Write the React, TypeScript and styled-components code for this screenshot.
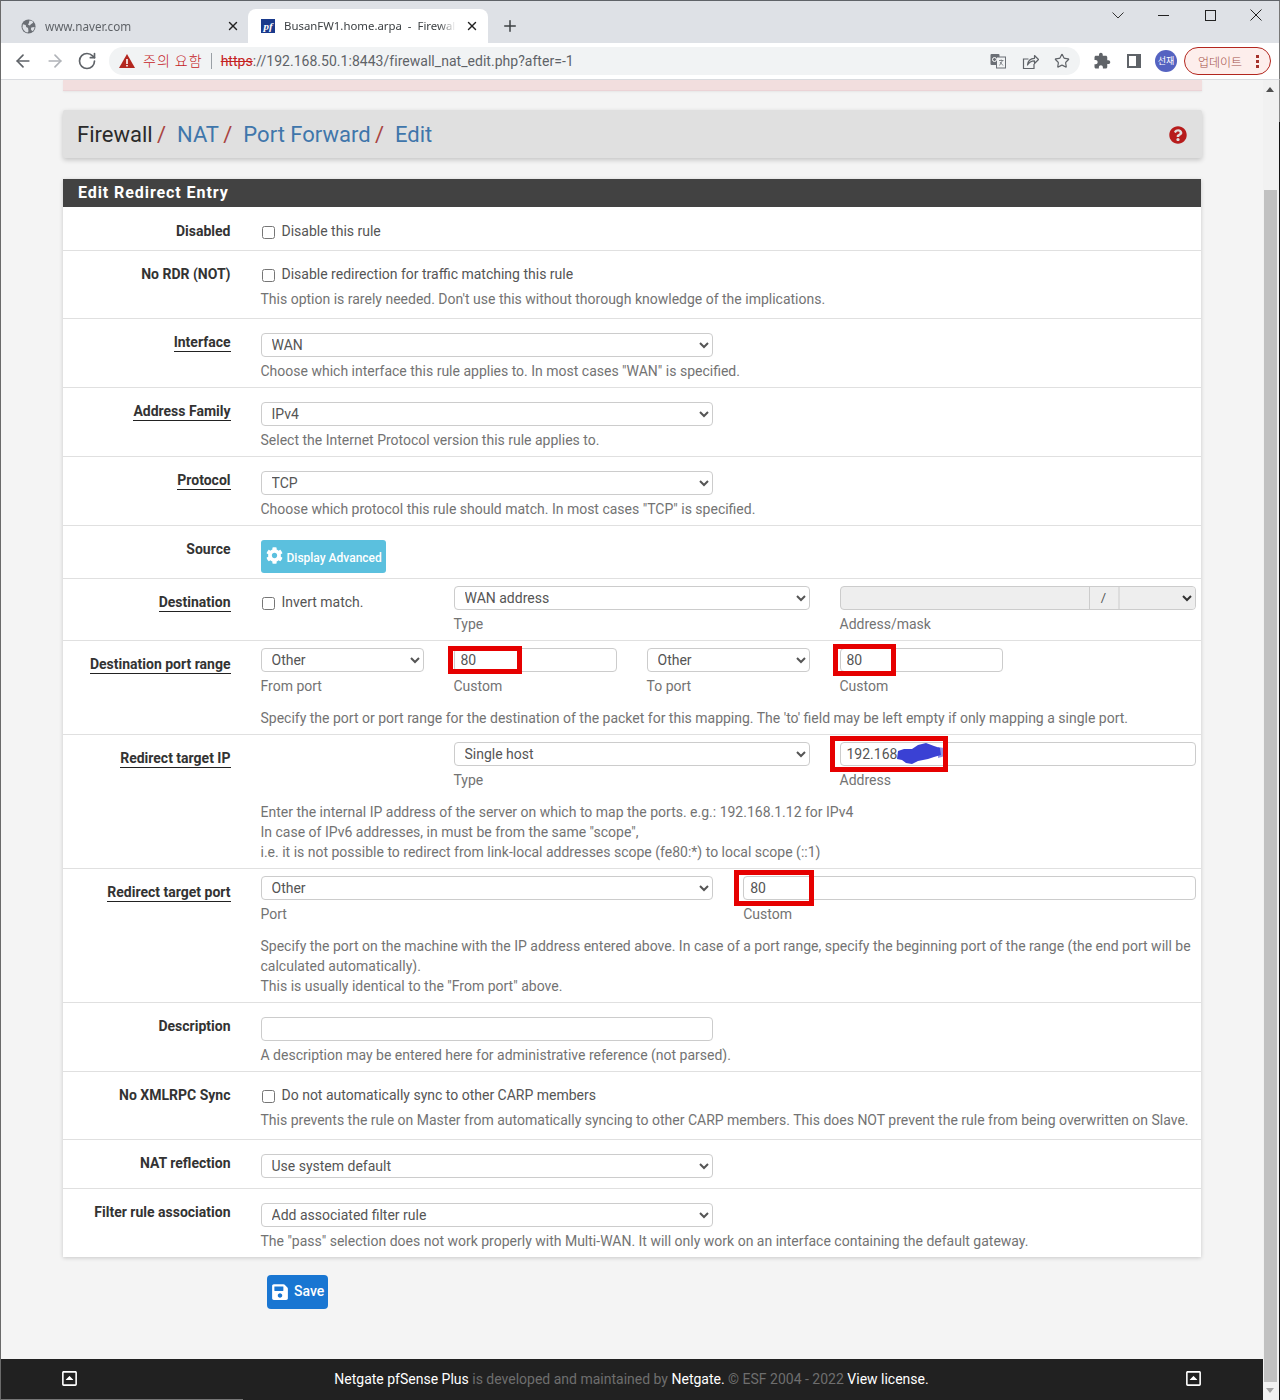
import React from 'react';
import styled, { createGlobalStyle } from 'styled-components';
import { ArrowLeft, ArrowRight, RotateCw, Star, X, Plus } from 'lucide-react';
import { FaCog, FaSave, FaQuestionCircle, FaRegCaretSquareUp } from 'react-icons/fa';

const Global = createGlobalStyle`
  html, body { margin: 0; padding: 0; background: #f4f4f4; }
  body { font-family: Roboto, "Noto Sans CJK KR", sans-serif; font-size: 14px; color: #333; }
  * { box-sizing: border-box; }
`;

const Frame = styled.div`
  width: 1280px; height: 1400px; display: flex; flex-direction: column; overflow: hidden;
  border-top: 1px solid #5f6368; border-left: 1px solid #6a6a6a;
`;
const TabStrip = styled.div`
  height: 42px; background: #dee1e6; display: flex; align-items: flex-end; flex: none; border-right: 1px solid #777;
`;
const Tab = styled.div<{ $active?: boolean; $w: number; $pr: number }>`
  width: ${p => p.$w}px; height: 34px; padding: 0 ${p => p.$pr}px 0 ${p => (p.$active ? 13 : 20)}px; display: flex; align-items: center; gap: 9px;
  border-radius: 8px 8px 0 0; background: ${p => (p.$active ? '#fff' : 'transparent')};
  font: ${p => (p.$active ? 11.4 : 11.7)}px "Noto Sans", sans-serif; color: ${p => (p.$active ? '#3c4043' : '#5f6368')};
`;
const TabTitle = styled.span`
  flex: 1; overflow: hidden; white-space: pre; margin-top: -1px;
  mask-image: linear-gradient(to right, #000 90%, transparent);
`;
const Favicon = styled.span`
  width: 14px; height: 14px; flex: none; background: #1a3a8c; color: #fff; font: italic bold 11px/14px "Liberation Serif", serif; text-align: center;
`;
const NewTab = styled.div`
  width: 44px; height: 34px; display: flex; align-items: center; justify-content: center; color: #3c4043;
`;
const WindowControls = styled.div`
  margin-left: auto; height: 42px; padding: 6px 16px 0 0; display: flex; gap: 30px; align-items: flex-start;
`;
const Toolbar = styled.div`
  height: 37px; flex: none; background: #fff; border-bottom: 1px solid #dadce0; border-right: 1px solid #777; display: flex; align-items: center; padding-left: 12px; color: #5f6368;
`;
const NavIcons = styled.div`
  display: flex; gap: 12px; width: 96px; align-items: center;
`;
const Omnibox = styled.div`
  width: 971px; height: 28px; border-radius: 14px; background: #f1f3f4; display: flex; align-items: center; padding: 0 9px 0 10px; margin-right: 11px;
`;
const Warn = styled.span`
  font: 300 14px/16px "Noto Sans CJK KR", sans-serif; color: #c5221f; margin: -3px 0 0 8px; letter-spacing: 1px;
`;
const Sep = styled.span`
  width: 1px; height: 16px; background: #9aa0a6; margin: 0 9px 0 8px;
`;
const Url = styled.span`
  font: 14px Roboto, sans-serif; color: #5f6368; letter-spacing: .03px;
`;
const Struck = styled.s`
  color: #c5221f;
`;
const OmniIcons = styled.div`
  margin-left: auto; display: flex; gap: 14px; align-items: center;
`;
const OmniIcon = styled.span`
  width: 18px; height: 18px; display: flex; align-items: center; justify-content: center; color: #5f6368;
`;
const ToolIcons = styled.div`
  display: flex; align-items: center; gap: 10px;
`;
const ToolIcon = styled.span`
  width: 22px; height: 22px; display: flex; align-items: center; justify-content: center;
`;
const Avatar = styled.span`
  width: 22px; height: 22px; border-radius: 50%; background: #5563c1; color: #fff; font: 9px/22px "Noto Sans CJK KR", sans-serif; text-align: center;
`;
const UpdatePill = styled.div`
  width: 87px; height: 28px; margin-left: 7px; border: 1px solid #b3261e; border-radius: 14px; background: #fdeeec; display: flex; align-items: center; justify-content: space-between;
  padding: 0 11px 0 13px; font: 300 12px "Noto Sans CJK KR", sans-serif; color: #a5514b;
`;
const Dots = styled.span`
  width: 3px; height: 15px; background: radial-gradient(circle, #a5312b 1.5px, transparent 1.6px) 0 0 / 3px 5px repeat-y;
`;

const Viewport = styled.div`
  flex: 1; display: flex; min-height: 0;
`;
const Page = styled.div`
  flex: 1; display: flex; flex-direction: column; background: #f4f4f4; min-width: 0;
`;
const Scrollbar = styled.div`
  width: 17px; flex: none; display: flex; flex-direction: column; align-items: flex-start; padding-top: 7px;
  background: linear-gradient(to bottom, #888 42px, #111 42px) right top / 1px 100% no-repeat, #f1f1f1;
`;
const ScrollArrow = styled.div<{ $down?: boolean; $c: string }>`
  width: 0; height: 0; margin-left: 3px; border-left: 4px solid transparent; border-right: 4px solid transparent;
  ${p => (p.$down ? `border-top: 5px solid ${p.$c};` : `border-bottom: 5px solid ${p.$c};`)}
`;
const ScrollThumb = styled.div`
  width: 13px; height: 1192px; background: #c1c1c1; margin: 98px 0 6px 1px;
`;
const Content = styled.div`
  padding: 0 62px; flex: 1;
`;
const Alert = styled.div`
  height: 11px; background: #f2dede; border-bottom: 1px solid #ebd3d6; margin-right: -1px; box-shadow: 0 1px 2px rgba(0,0,0,.06);
`;
const Breadcrumb = styled.div`
  margin: 19px -1px 21px 0; height: 48px; background: #e0e0e0; box-shadow: 0 2px 5px rgba(0,0,0,.2); display: flex; align-items: center; padding: 1px 15px 0 14px; font-size: 22px; border-radius: 2px;
`;
const Crumb = styled.span<{ $link?: boolean }>`
  color: ${p => (p.$link ? '#3f76ab' : '#2b2b2b')};
`;
const Slash = styled.span`
  color: #a94442; margin: 0 11px 0 4.3px;
`;
const HelpIcon = styled.span`
  margin-left: auto; color: #b71c1c; display: flex;
`;
const Panel = styled.div`
  background: #fff; box-shadow: 0 1px 4px rgba(0,0,0,.18);
`;
const PanelTitle = styled.h2`
  margin: 0; height: 28px; background: #424242; color: #fff; font: 700 16px/28px Roboto, sans-serif; padding-left: 15px; letter-spacing: .92px;
`;
const Row = styled.div<{ $h: number; $first?: boolean }>`
  height: ${p => p.$h}px; display: flex; gap: 30px;
  box-shadow: ${p => (p.$first ? 'none' : 'inset 0 1px 0 #e0e0e0')};
`;
const LabelCol = styled.div`
  width: 167.5px; flex: none; text-align: right; padding-top: 14px; line-height: 20px; font-weight: 700; color: #333;
`;
const Under = styled.span`
  border-bottom: 1px solid #222; padding-bottom: 1px;
`;
const Controls = styled.div<{ $top: number }>`
  flex: 1; padding: ${p => p.$top}px 5px 0 0; min-width: 0;
`;
const Check = styled.label<{ $mt?: number }>`
  display: flex; align-items: center; gap: 7px; height: 20px; color: #555; padding-left: 1px; margin-top: ${p => p.$mt ?? 0}px;
`;
const Box = styled.input.attrs({ type: 'checkbox' })`
  margin: 2px 0 0; width: 13px; height: 13px;
`;
const Help = styled.div<{ $mt?: number }>`
  margin-top: ${p => p.$mt ?? 4}px; line-height: 20px; color: #737373;
`;
const Sel = styled.select`
  display: block; width: 100%; height: 24px; font: 14px Roboto, sans-serif; color: #555; background: #fff; border: 1px solid #ccc; border-radius: 4px; padding: 0 6px;
`;
const Half = styled.div`
  width: 452.5px;
`;
const Inp = styled.input`
  display: block; width: 100%; height: 24px; font: 14px Roboto, sans-serif; color: #555; background: #fff; border: 1px solid #ccc; border-radius: 4px; padding: 0 6px; outline: none;
`;
const Cols = styled.div<{ $tpl: string; $mb?: number }>`
  display: grid; grid-template-columns: ${p => p.$tpl}; column-gap: 30px; margin-bottom: ${p => p.$mb ?? 0}px;
`;
const Sub = styled.div`
  margin-top: 4px; line-height: 20px; color: #737373;
`;
const Anno = styled.div`
  position: relative;
`;
const RedBox = styled.div<{ $l: number; $t: number; $w: number; $h: number }>`
  position: absolute; left: ${p => p.$l}px; top: ${p => p.$t}px; width: ${p => p.$w}px; height: ${p => p.$h}px; border: 5px solid #e60000; pointer-events: none;
`;
const Scribble = styled.svg`
  position: absolute; left: 56px; top: -1px; width: 50px; height: 26px; filter: blur(.7px);
`;
const Group = styled.div`
  display: flex; height: 24px; border: 1px solid #ccc; border-radius: 4px; background: #eee; overflow: hidden;
`;
const GroupInput = styled.div`
  flex: 1; border-right: 1px solid #ccc;
`;
const GroupSlash = styled.div`
  width: 30px; text-align: center; line-height: 22px; color: #555; border-right: 2px solid #ddd; font-size: 13px;
`;
const GroupSelect = styled.select`
  width: 75px; border: 0; background: #eee; height: 22px; color: #333; opacity: 1;
`;
const InfoBtn = styled.button`
  width: 125px; height: 33px; background: #5bc0de; border: 0; border-radius: 3px; color: #fff; display: flex; align-items: center; gap: 4px; padding: 0 0 0 5px; font: 500 12px Roboto, sans-serif;
`;
const GearWrap = styled.span`
  display: flex; margin-top: -3px;
`;
const InfoLabel = styled.span`
  margin-top: 3px;
`;
const SaveRow = styled.div`
  margin: 18px 0 0 204px;
`;
const SaveBtn = styled.button`
  width: 61px; height: 34px; background: #1976d2; border: 0; border-radius: 4px; color: #fff; display: flex; align-items: center; gap: 5px; padding: 0 0 0 4px; font: 500 14px Roboto, sans-serif;
`;
const SaveLabel = styled.span`
  margin-top: -2px;
`;
const Footer = styled.footer`
  height: 41px; flex: none; background: #212121; color: #6e6e6e; display: flex; align-items: center; justify-content: space-between; padding: 0 61px 2px 60px; font-size: 14px; position: relative;
  &::after { content: ''; position: absolute; left: 0; bottom: 0; width: 242px; height: 1px; background: #777; }
`;
const FooterStrong = styled.span`
  color: #fff;
`;
const FooterIcon = styled.span`
  color: #fff; display: flex; font-size: 17px;
`;

const Thin = styled.svg`
  display: block; shape-rendering: crispEdges;
`;

function Globe() {
  return (
    <svg width="15" height="15" viewBox="0 0 16 16">
      <circle cx="8" cy="8" r="7.5" fill="#6b6f75" />
      <path d="M2 5.500l3 1 .5 2 2 1 .5 3.500-1 1.500C4 14 2 11 1.600 9zM9 1.500l3 .5 1 2-2.500 1.500-1 1.500-2-1 1-2zM11 9l3.500-.5c-.2 2-1 3.500-2.500 4.500l-1.500-2z" fill="#dee1e6" />
    </svg>
  );
}

function ChromeChevron() {
  return <svg width="14" height="16" viewBox="0 0 14 16"><path d="M1.500 5.500L7 11l5.500-5.500" fill="none" stroke="#333" /></svg>;
}
function ChromeMin() {
  return <Thin width="16" height="16"><rect x="3" y="8" width="11" height="1" fill="#222" /></Thin>;
}
function ChromeMax() {
  return <Thin width="16" height="16"><rect x="4.500" y="3.500" width="10" height="10" fill="none" stroke="#222" /></Thin>;
}
function ChromeClose() {
  return <svg width="16" height="16" viewBox="0 0 16 16"><path d="M3.500 2.500l11 11M14.500 2.500l-11 11" stroke="#222" fill="none" /></svg>;
}

function Translate() {
  return (
    <svg width="16" height="16" viewBox="0 0 16 16">
      <rect x="0.500" y="1" width="9" height="11" rx="1" fill="#6b6f75" />
      <rect x="6.500" y="4" width="9" height="11" fill="#f1f3f4" stroke="#6b6f75" />
      <circle cx="4.500" cy="6.500" r="2" fill="none" stroke="#fff" />
      <path d="M9 7.500h4.500M11.200 6.500v1M9.500 12.500l3-5M10 9l3 3.500" stroke="#6b6f75" fill="none" strokeWidth=".8" />
    </svg>
  );
}

function ShareIcon() {
  return (
    <svg width="17" height="17" viewBox="0 0 17 17" fill="none" stroke="#5f6368" strokeWidth="1.200">
      <path d="M6.500 6H1.500v9.500h10.500V11" />
      <path d="M5.500 12c.3-4 3-6.500 7-6.700V2.500l4 4-4 4V7.800c-3 0-5.500 1.400-7 4.200z" strokeLinejoin="round" />
    </svg>
  );
}

function Puzzle() {
  return (
    <svg width="18" height="18" viewBox="0 0 24 24" fill="#5f6368">
      <path d="M20.500 11H19V7c0-1.100-.9-2-2-2h-4V3.500C13 2.120 11.880 1 10.500 1S8 2.120 8 3.500V5H4c-1.100 0-1.990.9-1.990 2v3.800H3.500c1.490 0 2.700 1.210 2.700 2.700s-1.210 2.700-2.700 2.700H2V20c0 1.100.9 2 2 2h3.800v-1.500c0-1.490 1.210-2.700 2.700-2.700 1.490 0 2.700 1.210 2.700 2.700V22H17c1.100 0 2-.9 2-2v-4h1.500c1.380 0 2.500-1.120 2.500-2.500S21.880 11 20.500 11z" />
    </svg>
  );
}

function SidePanel() {
  return (
    <Thin width="14" height="14" viewBox="0 0 14 14">
      <rect x="0" y="0" width="14" height="14" fill="#5f6368" />
      <rect x="2" y="2" width="7" height="10" fill="#fff" />
    </Thin>
  );
}

export default function App() {
  return (
    <Frame>
      <Global />
      <TabStrip>
        <Tab $w={247} $pr={8}>
          <Globe />
          <TabTitle>www.naver.com</TabTitle>
          <X size={14} color="#222" strokeWidth={2.4} />
        </Tab>
        <Tab $active $w={240} $pr={9}>
          <Favicon>pf</Favicon>
          <TabTitle>BusanFW1.home.arpa  -  Firewall: NAT</TabTitle>
          <X size={14} color="#222" strokeWidth={2.4} />
        </Tab>
        <NewTab><Plus size={18} strokeWidth={2} /></NewTab>
        <WindowControls>
          <ChromeChevron />
          <ChromeMin />
          <ChromeMax />
          <ChromeClose />
        </WindowControls>
      </TabStrip>
      <Toolbar>
        <NavIcons>
          <ArrowLeft size={20} color="#5f6368" />
          <ArrowRight size={20} color="#b0b3b8" />
          <RotateCw size={20} color="#5f6368" />
        </NavIcons>
        <Omnibox>
          <svg width="16" height="14" viewBox="0 0 16 14"><path d="M8 0l8 14H0z" fill="#b3261e" /><path d="M7.200 5h1.600v5H7.200zM7.200 11h1.600v1.500H7.200z" fill="#fff" /></svg>
          <Warn>주의 요함</Warn>
          <Sep />
          <Url><Struck>https</Struck>://192.168.50.1:8443/firewall_nat_edit.php?after=-1</Url>
          <OmniIcons>
            <OmniIcon><Translate /></OmniIcon>
            <OmniIcon><ShareIcon /></OmniIcon>
            <OmniIcon><Star size={16} strokeWidth={1.8} /></OmniIcon>
          </OmniIcons>
        </Omnibox>
        <ToolIcons>
          <ToolIcon><Puzzle /></ToolIcon>
          <ToolIcon><SidePanel /></ToolIcon>
          <Avatar>선재</Avatar>
        </ToolIcons>
        <UpdatePill>업데이트<Dots /></UpdatePill>
      </Toolbar>
      <Viewport>
        <Page>
          <Content>
            <Alert />
            <Breadcrumb>
              <Crumb>Firewall</Crumb><Slash>/</Slash>
              <Crumb $link>NAT</Crumb><Slash>/</Slash>
              <Crumb $link>Port Forward</Crumb><Slash>/</Slash>
              <Crumb $link>Edit</Crumb>
              <HelpIcon><FaQuestionCircle size={18} /></HelpIcon>
            </Breadcrumb>
            <Panel>
              <PanelTitle>Edit Redirect Entry</PanelTitle>
              <Row $h={43} $first>
                <LabelCol>Disabled</LabelCol>
                <Controls $top={14}><Check><Box />Disable this rule</Check></Controls>
              </Row>
              <Row $h={68}>
                <LabelCol>No RDR (NOT)</LabelCol>
                <Controls $top={14}>
                  <Check><Box />Disable redirection for traffic matching this rule</Check>
                  <Help $mt={5}>This option is rarely needed. Don't use this without thorough knowledge of the implications.</Help>
                </Controls>
              </Row>
              <Row $h={69}>
                <LabelCol><Under>Interface</Under></LabelCol>
                <Controls $top={15}>
                  <Half><Sel><option>WAN</option></Sel></Half>
                  <Help>Choose which interface this rule applies to. In most cases "WAN" is specified.</Help>
                </Controls>
              </Row>
              <Row $h={69}>
                <LabelCol><Under>Address Family</Under></LabelCol>
                <Controls $top={15}>
                  <Half><Sel><option>IPv4</option></Sel></Half>
                  <Help>Select the Internet Protocol version this rule applies to.</Help>
                </Controls>
              </Row>
              <Row $h={69}>
                <LabelCol><Under>Protocol</Under></LabelCol>
                <Controls $top={15}>
                  <Half><Sel><option>TCP</option></Sel></Half>
                  <Help>Choose which protocol this rule should match. In most cases "TCP" is specified.</Help>
                </Controls>
              </Row>
              <Row $h={53}>
                <LabelCol>Source</LabelCol>
                <Controls $top={15}>
                  <InfoBtn><GearWrap><FaCog size={17} /></GearWrap><InfoLabel>Display Advanced</InfoLabel></InfoBtn>
                </Controls>
              </Row>
              <Row $h={62}>
                <LabelCol><Under>Destination</Under></LabelCol>
                <Controls $top={8}>
                  <Cols $tpl="163px 356px 356px">
                    <Check $mt={6}><Box />Invert match.</Check>
                    <div><Sel><option>WAN address</option></Sel><Sub>Type</Sub></div>
                    <div>
                      <Group><GroupInput /><GroupSlash>/</GroupSlash><GroupSelect disabled><option></option></GroupSelect></Group>
                      <Sub>Address/mask</Sub>
                    </div>
                  </Cols>
                </Controls>
              </Row>
              <Row $h={94}>
                <LabelCol><Under>Destination port range</Under></LabelCol>
                <Controls $top={8}>
                  <Cols $tpl="repeat(4, 163px)" $mb={12}>
                    <div><Sel><option>Other</option></Sel><Sub>From port</Sub></div>
                    <div>
                      <Anno><Inp defaultValue="80" /><RedBox $l={-6} $t={-2} $w={74} $h={28} /></Anno>
                      <Sub>Custom</Sub>
                    </div>
                    <div><Sel><option>Other</option></Sel><Sub>To port</Sub></div>
                    <div>
                      <Anno><Inp defaultValue="80" /><RedBox $l={-7} $t={-4} $w={63} $h={32} /></Anno>
                      <Sub>Custom</Sub>
                    </div>
                  </Cols>
                  <Help $mt={0}>Specify the port or port range for the destination of the packet for this mapping. The 'to' field may be left empty if only mapping a single port.</Help>
                </Controls>
              </Row>
              <Row $h={134}>
                <LabelCol><Under>Redirect target IP</Under></LabelCol>
                <Controls $top={8}>
                  <Cols $tpl="163px 356px 356px" $mb={12}>
                    <div />
                    <div><Sel><option>Single host</option></Sel><Sub>Type</Sub></div>
                    <div>
                      <Anno>
                        <Inp defaultValue="192.168" />
                        <Scribble viewBox="0 0 50 26">
                          <path d="M42 6l6 1 1 8-7 2z" fill="#8f94e6" />
                          <path d="M2 10l6-2 8 0 6-4 8-2 8 3 6 2 1 7-7 2-6 2-10 2-6 3-6-1-4-3-5-1z" fill="#3a41d4" />
                        </Scribble>
                        <RedBox $l={-10} $t={-6} $w={118} $h={36} />
                      </Anno>
                      <Sub>Address</Sub>
                    </div>
                  </Cols>
                  <Help $mt={0}>
                    Enter the internal IP address of the server on which to map the ports. e.g.: 192.168.1.12 for IPv4<br />
                    In case of IPv6 addresses, in must be from the same "scope",<br />
                    i.e. it is not possible to redirect from link-local addresses scope (fe80:*) to local scope (::1)
                  </Help>
                </Controls>
              </Row>
              <Row $h={134}>
                <LabelCol><Under>Redirect target port</Under></LabelCol>
                <Controls $top={8}>
                  <Cols $tpl="1fr 1fr" $mb={12}>
                    <div><Sel><option>Other</option></Sel><Sub>Port</Sub></div>
                    <div>
                      <Anno><Inp defaultValue="80" /><RedBox $l={-9} $t={-6} $w={80} $h={36} /></Anno>
                      <Sub>Custom</Sub>
                    </div>
                  </Cols>
                  <Help $mt={0}>
                    Specify the port on the machine with the IP address entered above. In case of a port range, specify the beginning port of the range (the end port will be calculated automatically).<br />
                    This is usually identical to the "From port" above.
                  </Help>
                </Controls>
              </Row>
              <Row $h={69}>
                <LabelCol>Description</LabelCol>
                <Controls $top={15}>
                  <Half><Inp /></Half>
                  <Help>A description may be entered here for administrative reference (not parsed).</Help>
                </Controls>
              </Row>
              <Row $h={68}>
                <LabelCol>No XMLRPC Sync</LabelCol>
                <Controls $top={14}>
                  <Check><Box />Do not automatically sync to other CARP members</Check>
                  <Help $mt={5}>This prevents the rule on Master from automatically syncing to other CARP members. This does NOT prevent the rule from being overwritten on Slave.</Help>
                </Controls>
              </Row>
              <Row $h={49}>
                <LabelCol>NAT reflection</LabelCol>
                <Controls $top={15}><Half><Sel><option>Use system default</option></Sel></Half></Controls>
              </Row>
              <Row $h={69}>
                <LabelCol>Filter rule association</LabelCol>
                <Controls $top={15}>
                  <Half><Sel><option>Add associated filter rule</option></Sel></Half>
                  <Help>The "pass" selection does not work properly with Multi-WAN. It will only work on an interface containing the default gateway.</Help>
                </Controls>
              </Row>
            </Panel>
            <SaveRow><SaveBtn><FaSave size={18} /><SaveLabel>Save</SaveLabel></SaveBtn></SaveRow>
          </Content>
          <Footer>
            <FooterIcon><FaRegCaretSquareUp /></FooterIcon>
            <span><FooterStrong>Netgate pfSense Plus</FooterStrong> is developed and maintained by <FooterStrong>Netgate.</FooterStrong> © ESF 2004 - 2022 <FooterStrong>View license.</FooterStrong></span>
            <FooterIcon><FaRegCaretSquareUp /></FooterIcon>
          </Footer>
        </Page>
        <Scrollbar>
          <ScrollArrow $c="#505050" />
          <ScrollThumb />
          <ScrollArrow $down $c="#a3a3a3" />
        </Scrollbar>
      </Viewport>
    </Frame>
  );
}
